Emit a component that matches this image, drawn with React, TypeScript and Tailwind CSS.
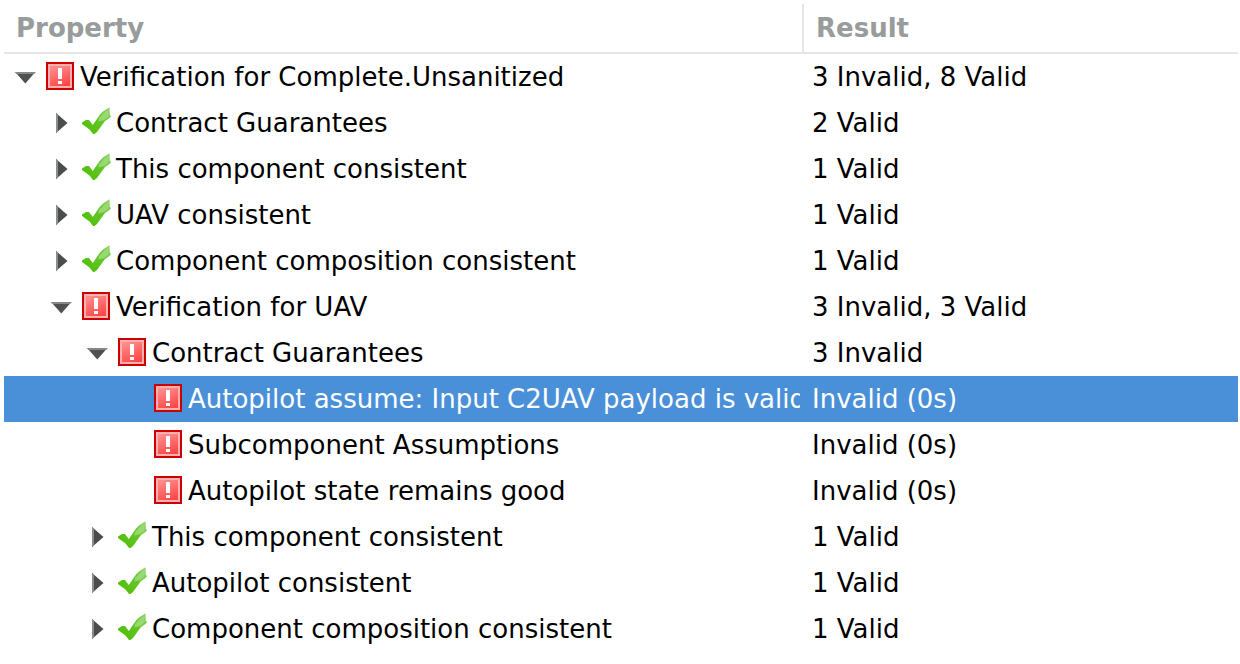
import { useState } from "react";

type Node = {
  id: number;
  depth: number;
  label: string;
  result: string;
  valid: boolean;
  state: "open" | "closed" | "leaf";
};

const nodes: Node[] = [
  { id: 0, depth: 0, label: "Verification for Complete.Unsanitized", result: "3 Invalid, 8 Valid", valid: false, state: "open" },
  { id: 1, depth: 1, label: "Contract Guarantees", result: "2 Valid", valid: true, state: "closed" },
  { id: 2, depth: 1, label: "This component consistent", result: "1 Valid", valid: true, state: "closed" },
  { id: 3, depth: 1, label: "UAV consistent", result: "1 Valid", valid: true, state: "closed" },
  { id: 4, depth: 1, label: "Component composition consistent", result: "1 Valid", valid: true, state: "closed" },
  { id: 5, depth: 1, label: "Verification for UAV", result: "3 Invalid, 3 Valid", valid: false, state: "open" },
  { id: 6, depth: 2, label: "Contract Guarantees", result: "3 Invalid", valid: false, state: "open" },
  { id: 7, depth: 3, label: "Autopilot assume: Input C2UAV payload is valid", result: "Invalid (0s)", valid: false, state: "leaf" },
  { id: 8, depth: 3, label: "Subcomponent Assumptions", result: "Invalid (0s)", valid: false, state: "leaf" },
  { id: 9, depth: 3, label: "Autopilot state remains good", result: "Invalid (0s)", valid: false, state: "leaf" },
  { id: 10, depth: 2, label: "This component consistent", result: "1 Valid", valid: true, state: "closed" },
  { id: 11, depth: 2, label: "Autopilot consistent", result: "1 Valid", valid: true, state: "closed" },
  { id: 12, depth: 2, label: "Component composition consistent", result: "1 Valid", valid: true, state: "closed" },
];

const indents = ["pl-2", "pl-11", "pl-20", "pl-29"];

function Arrow({ open }: { open: boolean }) {
  return (
    <svg viewBox="0 0 28 32" className="h-8 w-7" aria-hidden="true">
      {open ? (
        <>
          <path d="M4 12H22.500L13.300 22.500Z" fill="#4f5151" />
          <path d="M2.500 11H24L22 13H4.500Z" fill="#868888" />
        </>
      ) : (
        <>
          <path d="M8 6L19.500 16L8 26Z" fill="#4b4d4d" />
          <path d="M8 5.500L10 7.500V24.500L8 26.500Z" fill="#8b8d8d" />
        </>
      )}
    </svg>
  );
}

function InvalidIcon() {
  return (
    <svg viewBox="0 0 32 32" className="h-8 w-8 shrink-0" role="img" aria-label="Invalid">
      <defs>
        <linearGradient id="invalid-fill" x1="0.300" y1="0" x2="0.700" y2="1">
          <stop offset="0" stopColor="#ff8c8c" />
          <stop offset="1" stopColor="#ff4646" />
        </linearGradient>
      </defs>
      <rect x="2" y="1" width="28" height="28" fill="#cc0000" />
      <rect x="4" y="3" width="24" height="24" fill="#ffb0b0" />
      <rect x="6" y="5" width="20" height="20" fill="url(#invalid-fill)" />
      <path d="M14 7H18V18H14ZM14 20H18V23H14Z" fill="#fff" />
    </svg>
  );
}

function ValidIcon() {
  return (
    <svg viewBox="0 0 32 32" className="h-8 w-8 shrink-0" role="img" aria-label="Valid">
      <defs>
        <linearGradient id="valid-fill" x1="10" y1="22" x2="30" y2="2" gradientUnits="userSpaceOnUse">
          <stop offset="0" stopColor="#55c10f" />
          <stop offset="0.500" stopColor="#64c52b" />
          <stop offset="1" stopColor="#8ed567" />
        </linearGradient>
      </defs>
      <path
        d="M2 15.500L6 13H9L12.800 18L20 7.500L23 4.500L29.500 0.300L29.800 8L31.300 9L29.500 11L25 14L17 25L14.500 27H13L9.500 22.500L2 17Z"
        fill="url(#valid-fill)"
      />
      <path d="M19 11L24 6L28.500 2.500L28.500 9.500L24.500 13L18.500 14.500Z" fill="#a1dc80" opacity="0.800" />
    </svg>
  );
}

export default function App() {
  const [selected, setSelected] = useState(7);
  const [closed, setClosed] = useState<number[]>([]);

  const toggle = (id: number) =>
    setClosed((ids) => (ids.includes(id) ? ids.filter((i) => i !== id) : [...ids, id]));

  let hiddenBelow = Infinity;
  const visible = nodes.filter((node) => {
    if (node.depth > hiddenBelow) return false;
    hiddenBelow = closed.includes(node.id) ? node.depth : Infinity;
    return true;
  });

  return (
    <main className="min-h-screen bg-white pt-1 pr-0.5 pl-1 font-['DejaVu_Sans',sans-serif] text-[26px] leading-8 text-black">
      <table className="w-full table-fixed border-separate border-spacing-0 text-left">
        <colgroup>
          <col className="w-[800px]" />
          <col />
        </colgroup>
        <thead>
          <tr className="h-[50px] text-[#999c9c]">
            <th scope="col" className="border-r-2 border-b-2 border-[#e6e6e6] p-0 pl-3 font-bold">
              Property
            </th>
            <th scope="col" className="border-b-2 border-[#e6e6e6] p-0 pl-3 font-bold">
              Result
            </th>
          </tr>
        </thead>
        <tbody>
          {visible.map((node) => (
            <tr
              key={node.id}
              aria-selected={node.id === selected}
              onClick={() => setSelected(node.id)}
              className={node.id === selected ? "h-[46px] bg-[#4a90d9] text-white" : "h-[46px]"}
            >
              <td className="p-0 pr-1">
                <div className={`flex items-center gap-1 overflow-hidden ${indents[node.depth]}`}>
                  {node.state === "leaf" ? (
                    <span className="w-7 shrink-0" />
                  ) : (
                    <button
                      type="button"
                      className="shrink-0"
                      aria-label={`Toggle ${node.label}`}
                      onClick={() => toggle(node.id)}
                    >
                      <Arrow open={node.state === "open" && !closed.includes(node.id)} />
                    </button>
                  )}
                  {node.valid ? <ValidIcon /> : <InvalidIcon />}
                  <span className="whitespace-nowrap">{node.label}</span>
                </div>
              </td>
              <td className="p-0 pl-2 whitespace-nowrap">{node.result}</td>
            </tr>
          ))}
        </tbody>
      </table>
    </main>
  );
}
